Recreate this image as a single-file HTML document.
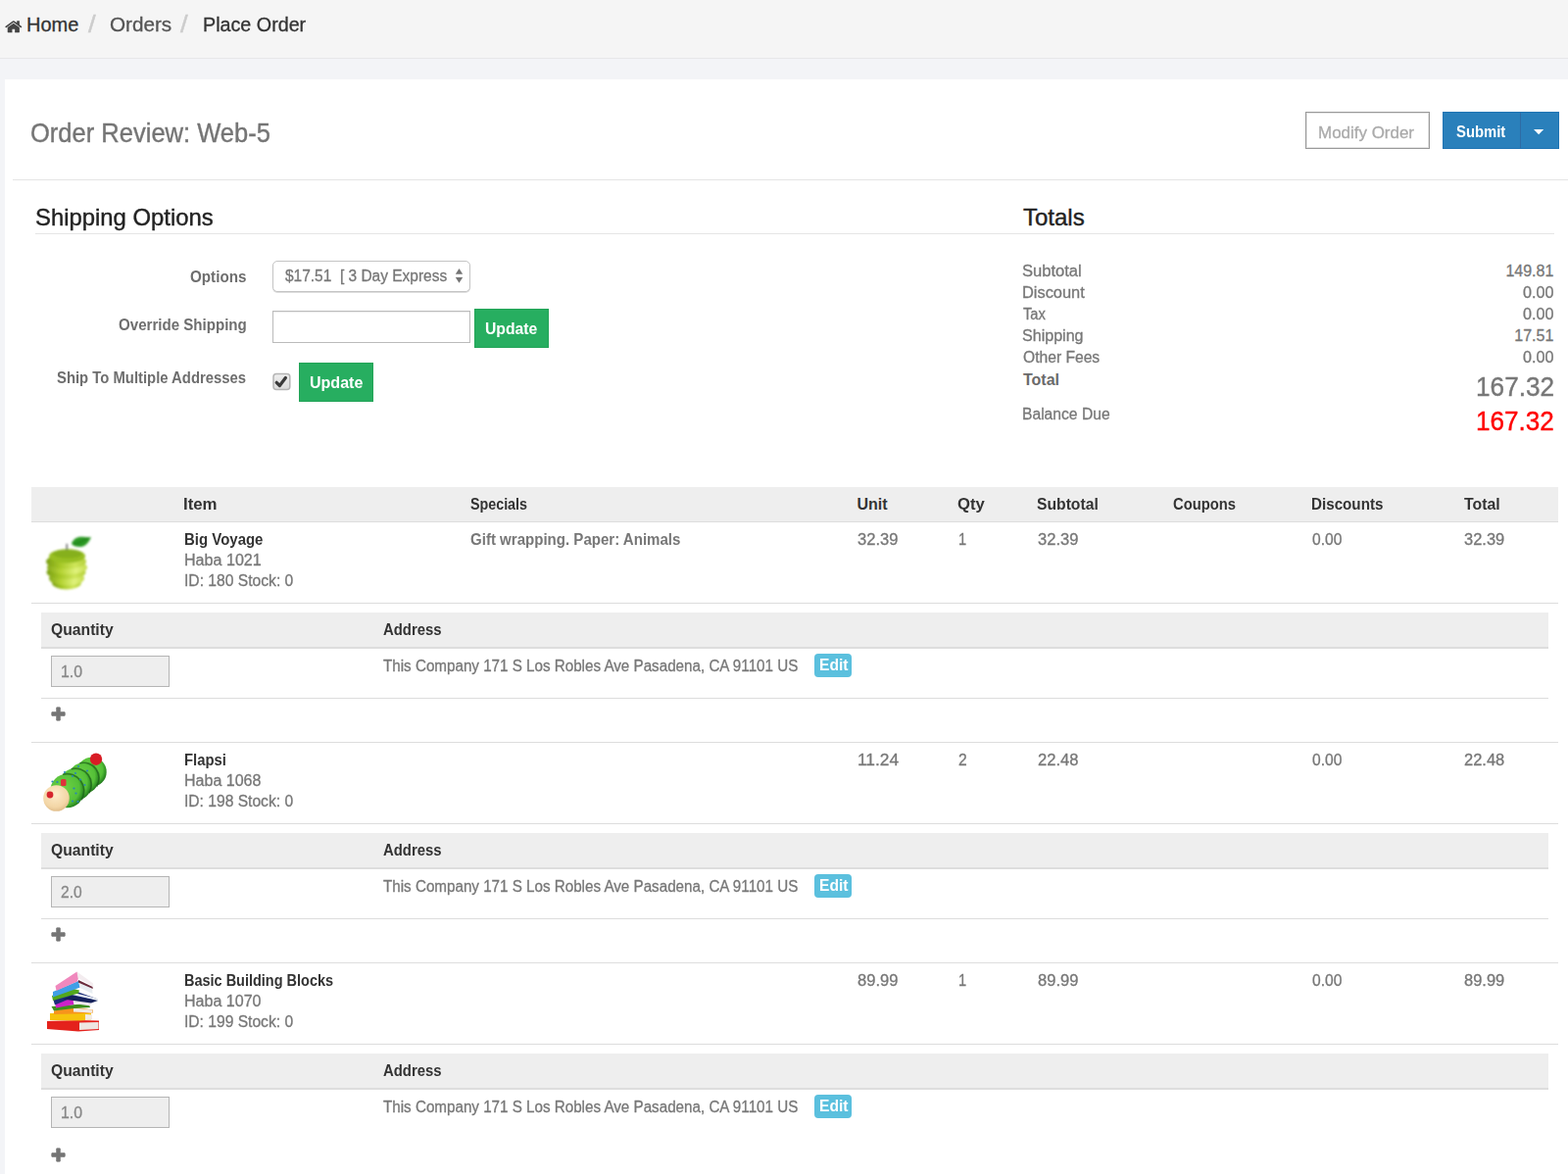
<!DOCTYPE html>
<html lang="en"><head><meta charset="utf-8"><title>Order Review: Web-5</title>
<style>
html,body{margin:0;padding:0}
body{width:1600px;height:1200px;overflow:hidden;background:#f3f4f7;font-family:"Liberation Sans", sans-serif;position:relative}
.r{position:absolute;display:block}
.t{position:absolute;white-space:pre;display:block;transform-origin:0 0;margin:0;font-weight:400;text-decoration:none}
.c0{font-size:20px;line-height:20px;color:#333;-webkit-text-stroke:0.3px #333;}
.c1{font-size:23px;line-height:23px;color:#ccc;-webkit-text-stroke:0.4px #ccc;}
.c2{font-size:20px;line-height:20px;color:#555;-webkit-text-stroke:0.3px #555;}
.c3{font-size:28px;line-height:28px;color:#757575;-webkit-text-stroke:0.4px #757575;}
.c4{font-size:16px;line-height:16px;color:#aaa;-webkit-text-stroke:0.3px #aaa;}
.c5{font-size:16px;line-height:16px;color:#fff;font-weight:700;}
.c6{font-size:24px;line-height:24px;color:#222;-webkit-text-stroke:0.4px #222;}
.c7{font-size:16px;line-height:16px;color:#6e6e6e;font-weight:700;}
.c8{font-size:16px;line-height:16px;color:#777;-webkit-text-stroke:0.3px #777;}
.c9{font-size:16px;line-height:16px;color:#6a6a6a;font-weight:700;}
.c10{font-size:27px;line-height:27px;color:#777;-webkit-text-stroke:0.4px #777;}
.c11{font-size:27px;line-height:27px;color:#ff0000;-webkit-text-stroke:0.4px #ff0000;}
.c12{font-size:16px;line-height:16px;color:#333;font-weight:700;}
.c13{font-size:16px;line-height:16px;color:#777;font-weight:700;}
.c14{font-size:16px;line-height:16px;color:#888;-webkit-text-stroke:0.3px #888;}
</style></head><body>
<div class="r crumb-bar" style="left:0px;top:0px;width:1600px;height:59px;background:#f5f5f5;"></div>
<div class="r" style="left:0px;top:59px;width:1600px;height:1px;background:#e7e7e9;"></div>
<div class="r panel" style="left:5px;top:81px;width:1595px;height:1117px;background:#fff;"></div>
<div class="r" style="left:0px;top:1198px;width:1600px;height:2px;background:#fff;"></div>
<nav class="breadcrumb">
<svg class="r" style="left:5px;top:19.500px" width="17.600" height="14.500" preserveAspectRatio="none" viewBox="0 128 1664 1536"><path fill="#444" d="M1408 992v480q0 26-19 45t-45 19h-384v-384h-256v384h-384q-26 0-45-19t-19-45v-480q0-1 .5-3t.5-3l575-474 575 474q1 2 1 6zm223-69l-62 74q-8 9-21 11h-3q-13 0-21-7l-692-577-692 577q-12 8-24 7-13-2-21-11l-62-74q-8-10-7-23.500t11-21.500l719-599q32-26 76-26t76 26l244 204v-195q0-14 9-23t23-9h192q14 0 23 9t9 23v408l219 182q10 8 11 21.500t-7 23.500z"/></svg>
<a class="t c0" id="t0" style="left:27.00px;top:15px;">Home</a>
<span class="t c1" id="t1" style="left:89.50px;top:14px;transform:scaleX(1.2000);">/</span>
<a class="t c2" id="t2" style="left:111.50px;top:15px;transform:scaleX(1.0339);">Orders</a>
<span class="t c1" id="t3" style="left:183.60px;top:14px;transform:scaleX(1.2000);">/</span>
<span class="t c0" id="t4" style="left:206.50px;top:15px;transform:scaleX(0.9857);">Place Order</span>
</nav>
<header class="page-header">
<div class="r hr" style="left:13px;top:183px;width:1587px;height:1px;background:#e5e5e5;"></div>
<div class="r btn btn-default" style="left:1332px;top:114px;width:127px;height:38px;background:#fff;border:1px solid #999;box-sizing:border-box;box-shadow:inset 0 0 0 1px #e4e4e4;"></div>
<div class="r btn btn-primary" style="left:1472px;top:114px;width:119px;height:38px;background:#2a80bb;border:1px solid #1f74b4;box-sizing:border-box;"></div>
<div class="r" style="left:1551px;top:115px;width:1px;height:36px;background:#2e6ca5;"></div>
<svg class="r" style="left:1564px;top:131px" width="12" height="7" viewBox="1564 131 12 7"><path d="M1565 132h10.200l-5.100 5.300z" fill="#fff"/></svg>
<h1 class="t c3" id="t5" style="left:31.10px;top:122px;transform:scaleX(0.9117);">Order Review: Web-5</h1>
<span class="t c4" id="t6" style="left:1345.00px;top:128px;transform:scaleX(1.0598);">Modify Order</span>
<span class="t c5" id="t7" style="left:1486.00px;top:127px;transform:scaleX(0.9259);">Submit</span>
</header>
<main>
<section class="shipping-options">
<div class="r legend-line" style="left:36px;top:238px;width:1550px;height:1px;background:#e5e5e5;"></div>
<div class="r select" style="left:278px;top:266px;width:202px;height:32px;background:#fff;border:1px solid #c4c4c4;border-radius:5px;box-sizing:border-box;box-shadow:0 1px 0 rgba(0,0,0,.13);"></div>
<svg class="r" style="left:460px;top:270px" width="16" height="22" viewBox="460 270 16 22"><path d="M468.500 274l3.700 5.700h-7.400z M464.800 283h7.400l-3.700 5.700z" fill="#757575"/></svg>
<div class="r input" style="left:278px;top:317px;width:202px;height:33px;background:#fff;border:1px solid #bbb;box-sizing:border-box;box-shadow:inset 0 1px 1px rgba(0,0,0,.08);"></div>
<div class="r btn btn-success" style="left:484px;top:315px;width:76px;height:40px;background:#27ae60;border:1px solid #22a457;box-sizing:border-box;"></div>
<div class="r btn btn-success" style="left:305px;top:370px;width:76px;height:40px;background:#27ae60;border:1px solid #22a457;box-sizing:border-box;"></div>
<svg class="r" style="left:276px;top:378px" width="24" height="24" viewBox="276 378 24 24"><defs><linearGradient id="cbg" x1="0" y1="0" x2="0" y2="1"><stop offset="0" stop-color="#eeeeee"/><stop offset="1" stop-color="#dcdcdc"/></linearGradient></defs><rect x="279" y="381.500" width="16.800" height="16" rx="3" fill="url(#cbg)" stroke="#b4b4b4" stroke-width="1.500"/><path d="M282.200 390.300l3.200 3.200l6-8" fill="none" stroke="#3a3a3a" stroke-width="3.200" stroke-linecap="round" stroke-linejoin="round"/></svg>
<h2 class="t c6" id="t8" style="left:36.40px;top:210px;transform:scaleX(0.9945);">Shipping Options</h2>
<label class="t c7" id="t10" style="left:194.00px;top:275px;transform:scaleX(0.9500);">Options</label>
<label class="t c7" id="t11" style="left:120.90px;top:324px;transform:scaleX(0.9432);">Override Shipping</label>
<label class="t c7" id="t12" style="left:58.00px;top:378px;transform:scaleX(0.9279);">Ship To Multiple Addresses</label>
<span class="t c8" id="t13" style="left:291.20px;top:274px;transform:scaleX(0.9673);">$17.51  [ 3 Day Express</span>
<span class="t c5" id="t14" style="left:495.00px;top:328px;transform:scaleX(0.9818);">Update</span>
<span class="t c5" id="t15" style="left:315.50px;top:383px;transform:scaleX(1.0016);">Update</span>
</section>
<section class="totals">
<h2 class="t c6" id="t9" style="left:1044.00px;top:210px;">Totals</h2>
<span class="t c8" id="t16" style="left:1043.00px;top:269px;transform:scaleX(1.0348);">Subtotal</span>
<span class="t c8" id="t17" style="left:1043.00px;top:291px;transform:scaleX(1.0242);">Discount</span>
<span class="t c8" id="t18" style="left:1044.00px;top:313px;transform:scaleX(0.9200);">Tax</span>
<span class="t c8" id="t19" style="left:1043.00px;top:335px;transform:scaleX(1.0039);">Shipping</span>
<span class="t c8" id="t20" style="left:1044.00px;top:357px;transform:scaleX(0.9766);">Other Fees</span>
<span class="t c8" id="t21" style="left:1043.00px;top:415px;transform:scaleX(0.9780);">Balance Due</span>
<strong class="t c9" id="t22" style="left:1044.00px;top:380px;">Total</strong>
<span class="t c8" id="t23" style="left:1536.40px;top:269px;">149.81</span>
<span class="t c8" id="t24" style="left:1554.00px;top:291px;transform:scaleX(1.0075);">0.00</span>
<span class="t c8" id="t25" style="left:1554.00px;top:313px;transform:scaleX(1.0075);">0.00</span>
<span class="t c8" id="t26" style="left:1545.30px;top:335px;">17.51</span>
<span class="t c8" id="t27" style="left:1554.00px;top:357px;transform:scaleX(1.0075);">0.00</span>
<span class="t c10" id="t28" style="left:1506.00px;top:382px;transform:scaleX(0.9702);">167.32</span>
<span class="t c11" id="t29" style="left:1506.00px;top:417px;transform:scaleX(0.9663);">167.32</span>
</section>
<section class="order-items">
<div class="thead">
<div class="r" style="left:32px;top:497px;width:1557.5px;height:35px;background:#eee;"></div>
<div class="r" style="left:32px;top:532px;width:1557.5px;height:1px;background:#ddd;"></div>
<strong class="t c12" id="t30" style="left:187.20px;top:507px;transform:scaleX(1.0506);">Item</strong>
<strong class="t c12" id="t31" style="left:480.00px;top:507px;transform:scaleX(0.8931);">Specials</strong>
<strong class="t c12" id="t32" style="left:874.50px;top:507px;">Unit</strong>
<strong class="t c12" id="t33" style="left:977.00px;top:507px;transform:scaleX(1.0404);">Qty</strong>
<strong class="t c12" id="t34" style="left:1058.00px;top:507px;transform:scaleX(0.9805);">Subtotal</strong>
<strong class="t c12" id="t35" style="left:1197.00px;top:507px;transform:scaleX(0.9217);">Coupons</strong>
<strong class="t c12" id="t36" style="left:1338.20px;top:507px;transform:scaleX(0.9496);">Discounts</strong>
<strong class="t c12" id="t37" style="left:1494.40px;top:507px;transform:scaleX(0.9900);">Total</strong>
</div>
<article class="item">
<div class="r" style="left:32px;top:615px;width:1557.5px;height:1px;background:#ddd;"></div>
<div class="r" style="left:42px;top:625px;width:1538px;height:35px;background:#eee;"></div>
<div class="r" style="left:42px;top:660px;width:1538px;height:2px;background:#ddd;"></div>
<div class="r" style="left:42px;top:712px;width:1538px;height:1px;background:#ddd;"></div>
<div class="r" style="left:32px;top:757px;width:1557.5px;height:1px;background:#ddd;"></div>
<div class="r input" style="left:52px;top:669px;width:121px;height:32px;background:#eee;border:1px solid #b5b5b5;box-sizing:border-box;"></div>
<div class="r label-info" style="left:831px;top:667px;width:38px;height:24px;background:#5bc0de;border-radius:4px;"></div>
<svg class="r" style="left:52px;top:721.3px" width="15" height="15" viewBox="0 0 15 15"><path d="M5.800 0.900h3.400v4.900h4.900v3.400h-4.900v4.900h-3.400v-4.900h-4.900v-3.400h4.900z" fill="#757575" stroke="#757575" stroke-linejoin="round" stroke-width="1"/></svg>
<svg class="r" style="left:40px;top:541px" width="64" height="66" viewBox="40 541 64 66">
<defs>
<filter id="bl1" x="-10%" y="-10%" width="120%" height="120%"><feGaussianBlur stdDeviation="0.800"/></filter>
<linearGradient id="ap1" x1="0" y1="0" x2="1" y2="0"><stop offset="0" stop-color="#86aa1c"/><stop offset="0.350" stop-color="#b6d436"/><stop offset="0.720" stop-color="#e0f27c"/><stop offset="1" stop-color="#c4dc4c"/></linearGradient>
<linearGradient id="ap2" x1="0" y1="0" x2="1" y2="0"><stop offset="0" stop-color="#7a9f14"/><stop offset="0.350" stop-color="#a6c828"/><stop offset="0.720" stop-color="#cfe65a"/><stop offset="1" stop-color="#b4d03a"/></linearGradient>
</defs>
<g filter="url(#bl1)">
<ellipse cx="68" cy="594.500" rx="15" ry="7" fill="url(#ap2)"/>
<ellipse cx="68" cy="590" rx="18" ry="7.500" fill="url(#ap1)"/>
<ellipse cx="67.500" cy="584" rx="20" ry="7" fill="url(#ap2)"/>
<ellipse cx="68.500" cy="579" rx="20.500" ry="7" fill="url(#ap1)"/>
<ellipse cx="67.500" cy="573" rx="20.500" ry="7.500" fill="url(#ap2)"/>
<ellipse cx="68.500" cy="567.500" rx="18.500" ry="7" fill="#98bf22"/>
<ellipse cx="69" cy="565" rx="15" ry="4.500" fill="#86b01a"/>
<path d="M68.300 560.500v-5" stroke="#555" stroke-width="1.400" stroke-linecap="round"/>
<path d="M73 555c1-5 6-7.500 11-7.300c3 .3 5 .8 9 .2c-2 5-5 9-10 10c-4 .6-8-.4-10-2.900z" fill="#2c9a23"/>
<path d="M75 555.500c4-1 10-3.500 15-6.500" stroke="#1f7a1c" stroke-width="1.200" fill="none"/>
</g>
</svg>
<strong class="t c12" id="t38" style="left:187.50px;top:543px;transform:scaleX(0.9360);">Big Voyage</strong>
<span class="t c8" id="t39" style="left:187.50px;top:564px;transform:scaleX(1.0055);">Haba 1021</span>
<span class="t c8" id="t40" style="left:187.50px;top:585px;transform:scaleX(0.9779);">ID: 180 Stock: 0</span>
<strong class="t c13" id="t41" style="left:480.00px;top:543px;transform:scaleX(0.9408);">Gift wrapping. Paper: Animals</strong>
<span class="t c8" id="t42" style="left:874.50px;top:543px;transform:scaleX(1.0348);">32.39</span>
<span class="t c8" id="t43" style="left:978.00px;top:543px;transform:scaleX(0.9118);">1</span>
<span class="t c8" id="t44" style="left:1058.75px;top:543px;transform:scaleX(1.0328);">32.39</span>
<span class="t c8" id="t45" style="left:1338.90px;top:543px;transform:scaleX(0.9742);">0.00</span>
<span class="t c8" id="t46" style="left:1494.00px;top:543px;transform:scaleX(1.0290);">32.39</span>
<strong class="t c12" id="t47" style="left:52.40px;top:635px;transform:scaleX(0.9816);">Quantity</strong>
<strong class="t c12" id="t48" style="left:390.75px;top:635px;transform:scaleX(0.9298);">Address</strong>
<span class="t c8" id="t49" style="left:391.00px;top:672px;transform:scaleX(0.9493);">This Company 171 S Los Robles Ave Pasadena, CA 91101 US</span>
<span class="t c5" id="t50" style="left:835.50px;top:671px;transform:scaleX(0.9748);">Edit</span>
<span class="t c14" id="t51" style="left:61.50px;top:678px;transform:scaleX(0.9913);">1.0</span>
</article>
<article class="item">
<div class="r" style="left:32px;top:840px;width:1557.5px;height:1px;background:#ddd;"></div>
<div class="r" style="left:42px;top:850px;width:1538px;height:35px;background:#eee;"></div>
<div class="r" style="left:42px;top:885px;width:1538px;height:2px;background:#ddd;"></div>
<div class="r" style="left:42px;top:937px;width:1538px;height:1px;background:#ddd;"></div>
<div class="r" style="left:32px;top:982px;width:1557.5px;height:1px;background:#ddd;"></div>
<div class="r input" style="left:52px;top:894px;width:121px;height:32px;background:#eee;border:1px solid #b5b5b5;box-sizing:border-box;"></div>
<div class="r label-info" style="left:831px;top:892px;width:38px;height:24px;background:#5bc0de;border-radius:4px;"></div>
<svg class="r" style="left:52px;top:946.3px" width="15" height="15" viewBox="0 0 15 15"><path d="M5.800 0.900h3.400v4.900h4.900v3.400h-4.900v4.900h-3.400v-4.900h-4.900v-3.400h4.900z" fill="#757575" stroke="#757575" stroke-linejoin="round" stroke-width="1"/></svg>
<svg class="r" style="left:38px;top:762px" width="76" height="76" viewBox="38 762 76 76">
<defs>
<filter id="bl2" x="-10%" y="-10%" width="120%" height="120%"><feGaussianBlur stdDeviation="0.650"/></filter>
<radialGradient id="hd" cx="0.450" cy="0.350" r="0.700"><stop offset="0" stop-color="#fdeccb"/><stop offset="0.700" stop-color="#f3d6a6"/><stop offset="1" stop-color="#dcb784"/></radialGradient>
<radialGradient id="gd" cx="0.400" cy="0.420" r="0.640"><stop offset="0" stop-color="#6fd246"/><stop offset="0.720" stop-color="#55c038"/><stop offset="0.900" stop-color="#2f9024"/><stop offset="1" stop-color="#1f6f1a"/></radialGradient>
</defs>
<g filter="url(#bl2)">
<circle cx="93.700" cy="787.700" r="15" fill="url(#gd)"/>
<circle cx="98" cy="774.700" r="6.200" fill="#d81f26"/>
<circle cx="85.300" cy="794.100" r="15.800" fill="url(#gd)"/>
<path d="M81.2 778.8A15.8 15.8 0 0 1 98.7 802.5" fill="none" stroke="#1b5f19" stroke-width="1.700" stroke-opacity="0.700"/>
<circle cx="76.900" cy="800.600" r="16.500" fill="url(#gd)"/>
<path d="M72.6 784.7A16.5 16.5 0 0 1 90.9 809.3" fill="none" stroke="#1b5f19" stroke-width="1.700" stroke-opacity="0.700"/>
<circle cx="68.500" cy="807" r="17.300" fill="url(#gd)"/>
<path d="M64.0 790.3A17.3 17.3 0 0 1 83.2 816.2" fill="none" stroke="#1b5f19" stroke-width="1.700" stroke-opacity="0.700"/>
<rect x="62" y="795" width="5.500" height="7" rx="1.500" fill="#e0303a"/>
<circle cx="57.500" cy="814.500" r="13.300" fill="url(#hd)"/>
<circle cx="51" cy="811" r="3.400" fill="#d6262d"/>
<g fill="#2a86b8"><circle cx="80" cy="782" r="1.100"/><circle cx="66" cy="788" r="1.100"/><circle cx="77" cy="789" r="1.100"/><circle cx="89" cy="786.500" r="1.100"/><circle cx="74" cy="792" r="1.100"/><circle cx="82" cy="795.500" r="1.100"/><circle cx="86.500" cy="801" r="1.100"/><circle cx="75.500" cy="804.500" r="1.100"/><circle cx="77.500" cy="809.500" r="1.100"/><circle cx="53.500" cy="797.500" r="1.100"/><circle cx="58.500" cy="798" r="1.100"/><circle cx="74" cy="817.500" r="1.100"/><circle cx="79.500" cy="818" r="1.100"/></g>
</g>
</svg>
<strong class="t c12" id="t52" style="left:187.50px;top:768px;transform:scaleX(0.9282);">Flapsi</strong>
<span class="t c8" id="t53" style="left:187.50px;top:789px;transform:scaleX(1.0012);">Haba 1068</span>
<span class="t c8" id="t54" style="left:187.50px;top:810px;transform:scaleX(0.9757);">ID: 198 Stock: 0</span>
<span class="t c8" id="t55" style="left:874.50px;top:768px;transform:scaleX(1.0844);">11.24</span>
<span class="t c8" id="t56" style="left:977.80px;top:768px;transform:scaleX(0.9724);">2</span>
<span class="t c8" id="t57" style="left:1058.75px;top:768px;transform:scaleX(1.0328);">22.48</span>
<span class="t c8" id="t58" style="left:1338.90px;top:768px;transform:scaleX(0.9742);">0.00</span>
<span class="t c8" id="t59" style="left:1494.00px;top:768px;transform:scaleX(1.0290);">22.48</span>
<strong class="t c12" id="t60" style="left:52.40px;top:860px;transform:scaleX(0.9816);">Quantity</strong>
<strong class="t c12" id="t61" style="left:390.75px;top:860px;transform:scaleX(0.9298);">Address</strong>
<span class="t c8" id="t62" style="left:391.00px;top:897px;transform:scaleX(0.9493);">This Company 171 S Los Robles Ave Pasadena, CA 91101 US</span>
<span class="t c5" id="t63" style="left:835.50px;top:896px;transform:scaleX(0.9748);">Edit</span>
<span class="t c14" id="t64" style="left:61.50px;top:903px;transform:scaleX(0.9735);">2.0</span>
</article>
<article class="item">
<div class="r" style="left:32px;top:1065px;width:1557.5px;height:1px;background:#ddd;"></div>
<div class="r" style="left:42px;top:1075px;width:1538px;height:35px;background:#eee;"></div>
<div class="r" style="left:42px;top:1110px;width:1538px;height:2px;background:#ddd;"></div>
<div class="r input" style="left:52px;top:1119px;width:121px;height:32px;background:#eee;border:1px solid #b5b5b5;box-sizing:border-box;"></div>
<div class="r label-info" style="left:831px;top:1117px;width:38px;height:24px;background:#5bc0de;border-radius:4px;"></div>
<svg class="r" style="left:52px;top:1171.3px" width="15" height="15" viewBox="0 0 15 15"><path d="M5.800 0.900h3.400v4.900h4.900v3.400h-4.900v4.900h-3.400v-4.900h-4.900v-3.400h4.900z" fill="#757575" stroke="#757575" stroke-linejoin="round" stroke-width="1"/></svg>
<svg class="r" style="left:42px;top:988px" width="64" height="68" viewBox="42 988 64 68">
<defs><filter id="bl3" x="-10%" y="-10%" width="120%" height="120%"><feGaussianBlur stdDeviation="0.650"/></filter></defs>
<g filter="url(#bl3)">
<path d="M48 1042l32-1 21 .5v9.500l-21 1.500-32-2.500z" fill="#e4211f"/>
<path d="M81 1043.500l19.500-.5v7l-19.500 1z" fill="#eee6e2"/>
<path d="M51 1034l30-1 12 1v6.500l-12 1-30-.5z" fill="#f6c30d"/>
<path d="M87 1035l7 .5v5l-7 .5z" fill="#f2ebe4"/>
<path d="M55 1031.500l20-4 20 3v3l-20 1-20 .5z" fill="#f7941d"/>
<path d="M75 1028.500l19.500 2v3l-19.500-1z" fill="#efe9e6"/>
<path d="M52.500 1027l38-3 1.500 4-17 1-20 2.500z" fill="#3c8f1e"/>
<path d="M56.500 1023l18-5 1 7-18.500 3.500z" fill="#cc22c8"/>
<path d="M74.500 1018l18 5v3.500l-17.500-2.500z" fill="#eee8ee"/>
<path d="M54 1019l22-8 24 8.500-8 2-17-4-19 8z" fill="#1c2f7a"/>
<path d="M69 1011.500l31 7.500v2l-31-7z" fill="#e9edf2"/>
<path d="M64 1019.500l9-3.500 27 5-7 2.500z" fill="#14205a"/>
<path d="M53 1016l22-7 6 1.500-1 3-26 7.500z" fill="#52a81c"/>
<path d="M54 1012l26-11 2 6.500-28 10z" fill="#3f9fe6"/>
<path d="M80 1001l14 7 .5 6-13-6z" fill="#e8eef2"/>
<path d="M56.500 1006l22-14.500 2 4.500-1.500 5.500-21.500 9.500z" fill="#f088bd"/>
<path d="M78.500 991.500l16.500 12 .5 3.500-16-9z" fill="#f3ecef"/>
<path d="M80 1000l14.500 7 .3 2-15-6.500z" fill="#6a2a3a"/>
</g>
</svg>
<strong class="t c12" id="t65" style="left:187.50px;top:993px;transform:scaleX(0.9049);">Basic Building Blocks</strong>
<span class="t c8" id="t66" style="left:187.50px;top:1014px;transform:scaleX(1.0028);">Haba 1070</span>
<span class="t c8" id="t67" style="left:187.50px;top:1035px;transform:scaleX(0.9757);">ID: 199 Stock: 0</span>
<span class="t c8" id="t68" style="left:874.50px;top:993px;transform:scaleX(1.0348);">89.99</span>
<span class="t c8" id="t69" style="left:978.00px;top:993px;transform:scaleX(0.9118);">1</span>
<span class="t c8" id="t70" style="left:1058.75px;top:993px;transform:scaleX(1.0328);">89.99</span>
<span class="t c8" id="t71" style="left:1338.90px;top:993px;transform:scaleX(0.9742);">0.00</span>
<span class="t c8" id="t72" style="left:1494.00px;top:993px;transform:scaleX(1.0290);">89.99</span>
<strong class="t c12" id="t73" style="left:52.40px;top:1085px;transform:scaleX(0.9816);">Quantity</strong>
<strong class="t c12" id="t74" style="left:390.75px;top:1085px;transform:scaleX(0.9298);">Address</strong>
<span class="t c8" id="t75" style="left:391.00px;top:1122px;transform:scaleX(0.9493);">This Company 171 S Los Robles Ave Pasadena, CA 91101 US</span>
<span class="t c5" id="t76" style="left:835.50px;top:1121px;transform:scaleX(0.9748);">Edit</span>
<span class="t c14" id="t77" style="left:61.50px;top:1128px;transform:scaleX(0.9913);">1.0</span>
</article>
</section>
</main>
</body></html>
